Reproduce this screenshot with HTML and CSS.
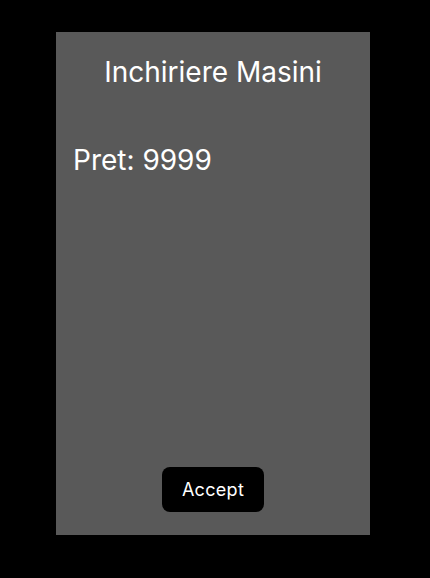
FILE: index.html
```html
<!DOCTYPE html>
<html>
<head>
<meta charset="utf-8">
<link rel="stylesheet" href="styles.css">
</head>
<body>
<div class="screen">
  <h1 class="title">Inchiriere Masini</h1>
  <p class="price">Pret: 9999</p>
  <div class="actions">
    <button class="accept">Accept</button>
  </div>
</div>
</body>
</html>
```
FILE: styles.css
```css
html, body {
  margin: 0;
  padding: 0;
  background: #000;
  height: 578px;
}
body {
  padding-top: 32px;
  box-sizing: border-box;
  font-family: Inter, "Noto Sans", sans-serif;
}
.screen {
  width: 314px;
  height: 503px;
  margin: 0 0 0 56px;
  background: #595959;
  display: flex;
  flex-direction: column;
  color: #fff;
}
.title {
  margin: 0;
  padding-top: 23px;
  font-size: 28px;
  font-weight: 400;
  line-height: 34px;
  text-align: center;
}
.price {
  margin: 0;
  padding: 54px 0 0 17px;
  font-size: 28px;
  line-height: 34px;
}
.actions {
  margin-top: auto;
  padding-bottom: 23px;
  display: flex;
  justify-content: center;
}
.accept {
  width: 102px;
  height: 45px;
  background: #000;
  color: #fff;
  border: none;
  border-radius: 8px;
  font-family: Inter, "Noto Sans", sans-serif;
  font-size: 18px;
  letter-spacing: 0.3px;
  padding: 0;
}
```
